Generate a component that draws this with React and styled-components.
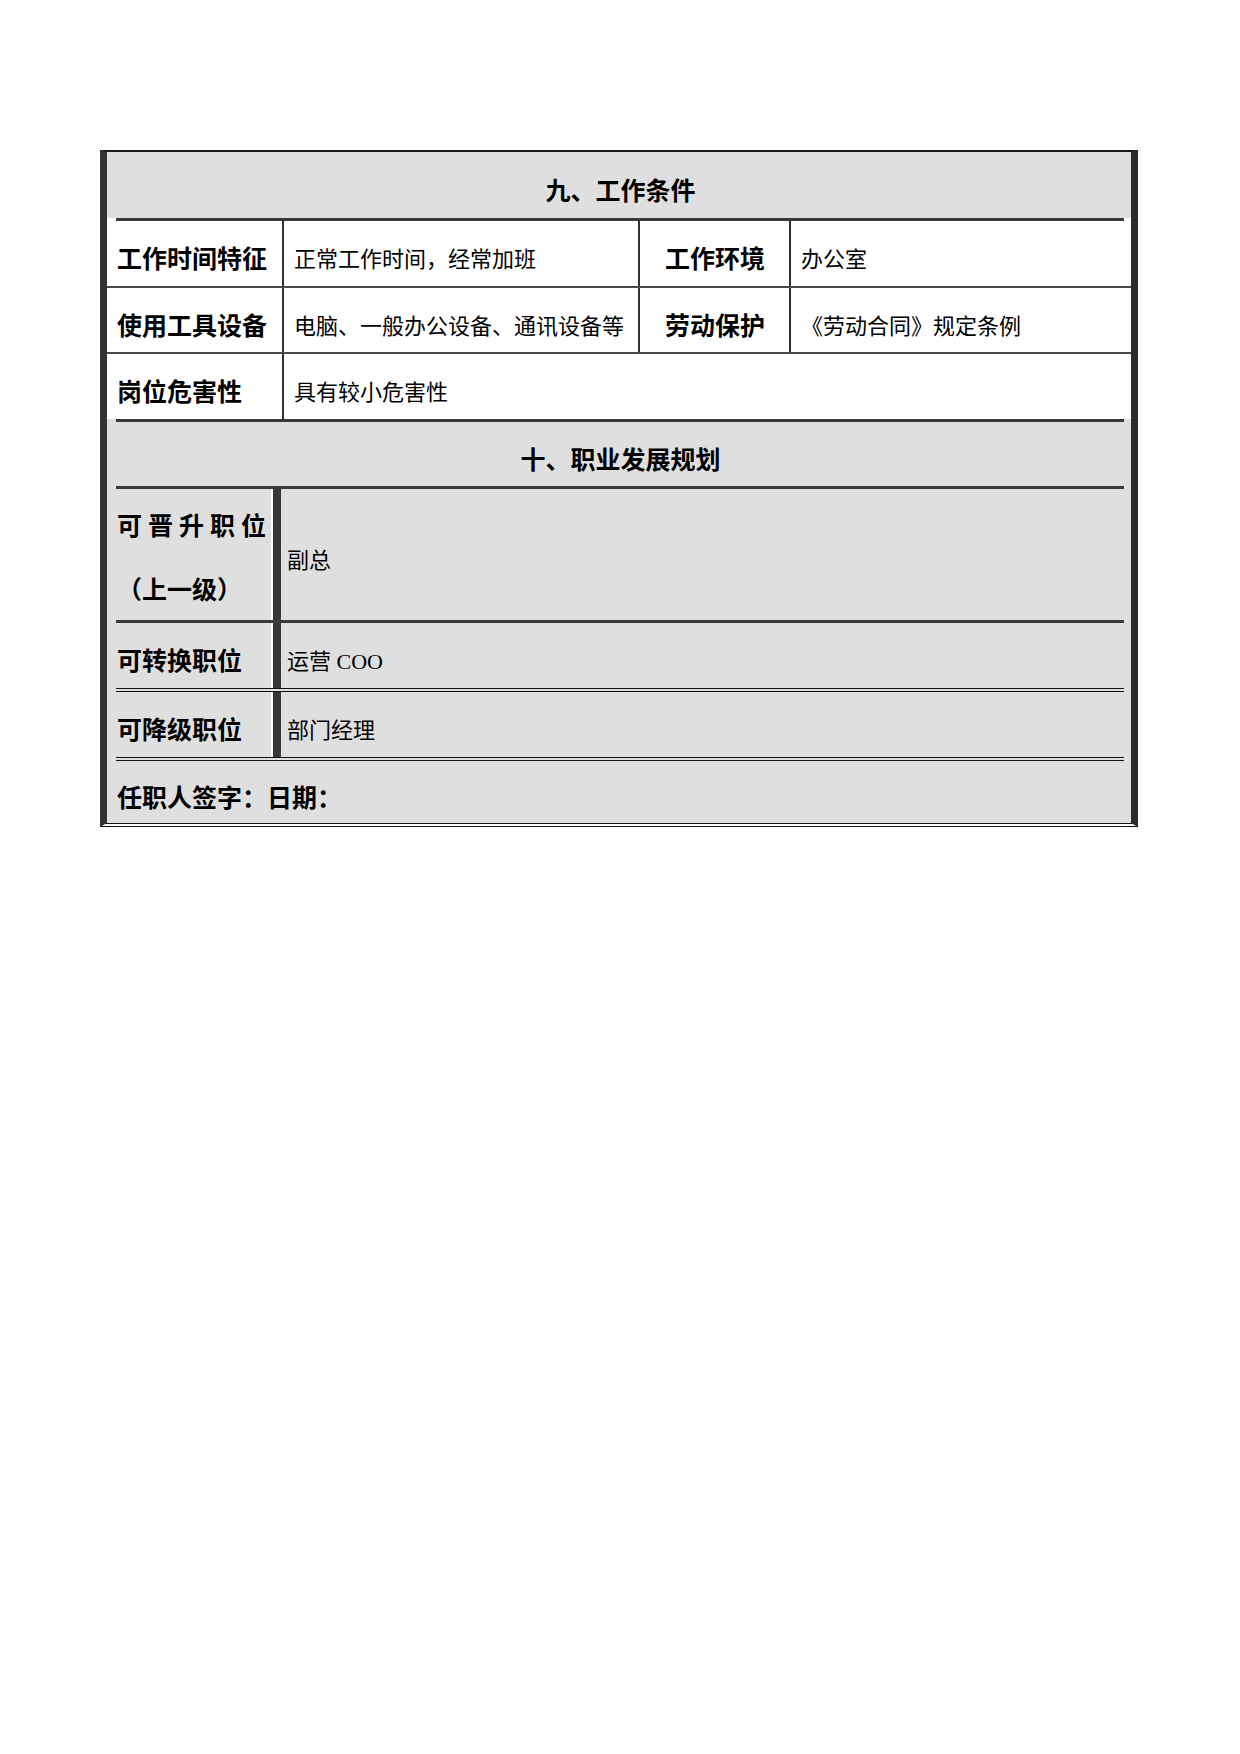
import React from 'react';
import styled, { createGlobalStyle, css } from 'styled-components';

const GlobalStyle = createGlobalStyle`
  html, body { margin: 0; padding: 0; background: #fff; }
  body {
    font-family: "Noto Sans CJK SC", "Noto Sans", sans-serif;
    color: #000;
  }
`;

const GRAY = '#dfdfdf';

const Page = styled.div`
  width: 1240px;
  min-height: 1754px;
  padding: 150px 0 0 100px;
  box-sizing: border-box;
`;

const Sheet = styled.div`
  width: 1038px;
  box-sizing: border-box;
  border-left: 7px solid #333;
  border-right: 7px solid #2c2c2c;
  border-top: 2px solid #1a1a1a;
  border-bottom: 4px double #111;
`;

const lineStyles = {
  thick: css`border-top: 3px solid #3a3a3a;`,
  double: css`border-top: 4px double #111;`,
  none: css``,
};

const Row = styled.div`
  background: ${(p) => p.$bg || '#fff'};
  padding: 0 7px 0 9px;
  ${(p) => p.$thin && css`border-top: 2px solid #4a4a4a;`}
`;

const RowInner = styled.div`
  display: grid;
  grid-template-columns: ${(p) => p.$cols || '1fr'};
  height: ${(p) => p.$h}px;
  ${(p) => lineStyles[p.$line || 'none']}
`;

const Cell = styled.div`
  display: flex;
  align-items: center;
  box-sizing: border-box;
  padding-top: 7px;
  ${(p) => p.$divider && css`border-left: 2px solid #333;`}
`;

const Label = styled(Cell)`
  font-weight: 700;
  font-size: 25px;
  padding-left: 1px;
  justify-content: ${(p) => (p.$center ? 'center' : 'flex-start')};
`;

const Value = styled(Cell)`
  font-family: "Liberation Serif", "Noto Sans CJK SC", serif;
  font-size: 22px;
  padding-left: ${(p) => p.$pl ?? 10}px;
`;

const SideLabel = styled.div`
  display: flex;
  flex-direction: column;
  justify-content: center;
  box-sizing: border-box;
  padding-top: ${(p) => p.$pt ?? 7}px;
  padding-left: 1px;
  font-weight: 700;
  font-size: 25px;
  line-height: ${(p) => (p.$lh ? `${p.$lh}px` : 'normal')};
  border-right: 8px solid #383838;
  box-shadow: inset -2px 0 0 #fff;
`;

const Spaced = styled.span`
  letter-spacing: 6px;
  white-space: nowrap;
`;

export default function App() {
  return (
    <>
      <GlobalStyle />
      <Page>
        <Sheet>
          <Row $bg={GRAY}>
            <RowInner $h={66}>
              <Label $center>九、工作条件</Label>
            </RowInner>
          </Row>

          <Row>
            <RowInner $line="thick" $h={65} $cols="166px 356px 151px 335px">
              <Label>工作时间特征</Label>
              <Value $divider>正常工作时间，经常加班</Value>
              <Label $divider $center>工作环境</Label>
              <Value $divider>办公室</Value>
            </RowInner>
          </Row>

          <Row $thin>
            <RowInner $h={64} $cols="166px 356px 151px 335px">
              <Label>使用工具设备</Label>
              <Value $divider>电脑、一般办公设备、通讯设备等</Value>
              <Label $divider $center>劳动保护</Label>
              <Value $divider>《劳动合同》规定条例</Value>
            </RowInner>
          </Row>

          <Row $thin>
            <RowInner $h={65} $cols="166px 1fr">
              <Label>岗位危害性</Label>
              <Value $divider>具有较小危害性</Value>
            </RowInner>
          </Row>

          <Row $bg={GRAY}>
            <RowInner $line="thick" $h={64}>
              <Label $center>十、职业发展规划</Label>
            </RowInner>
          </Row>

          <Row $bg={GRAY}>
            <RowInner $line="thick" $h={131} $cols="165px 1fr">
              <SideLabel $lh={64} $pt={2}>
                <Spaced>可晋升职位</Spaced>
                <span>（上一级）</span>
              </SideLabel>
              <Value $pl={6}>副总</Value>
            </RowInner>
          </Row>

          <Row $bg={GRAY}>
            <RowInner $line="thick" $h={65} $cols="165px 1fr">
              <SideLabel>可转换职位</SideLabel>
              <Value $pl={6}>运营 COO</Value>
            </RowInner>
          </Row>

          <Row $bg={GRAY}>
            <RowInner $line="double" $h={65} $cols="165px 1fr">
              <SideLabel>可降级职位</SideLabel>
              <Value $pl={6}>部门经理</Value>
            </RowInner>
          </Row>

          <Row $bg={GRAY}>
            <RowInner $line="double" $h={62}>
              <Label>任职人签字：日期：</Label>
            </RowInner>
          </Row>
        </Sheet>
      </Page>
    </>
  );
}
